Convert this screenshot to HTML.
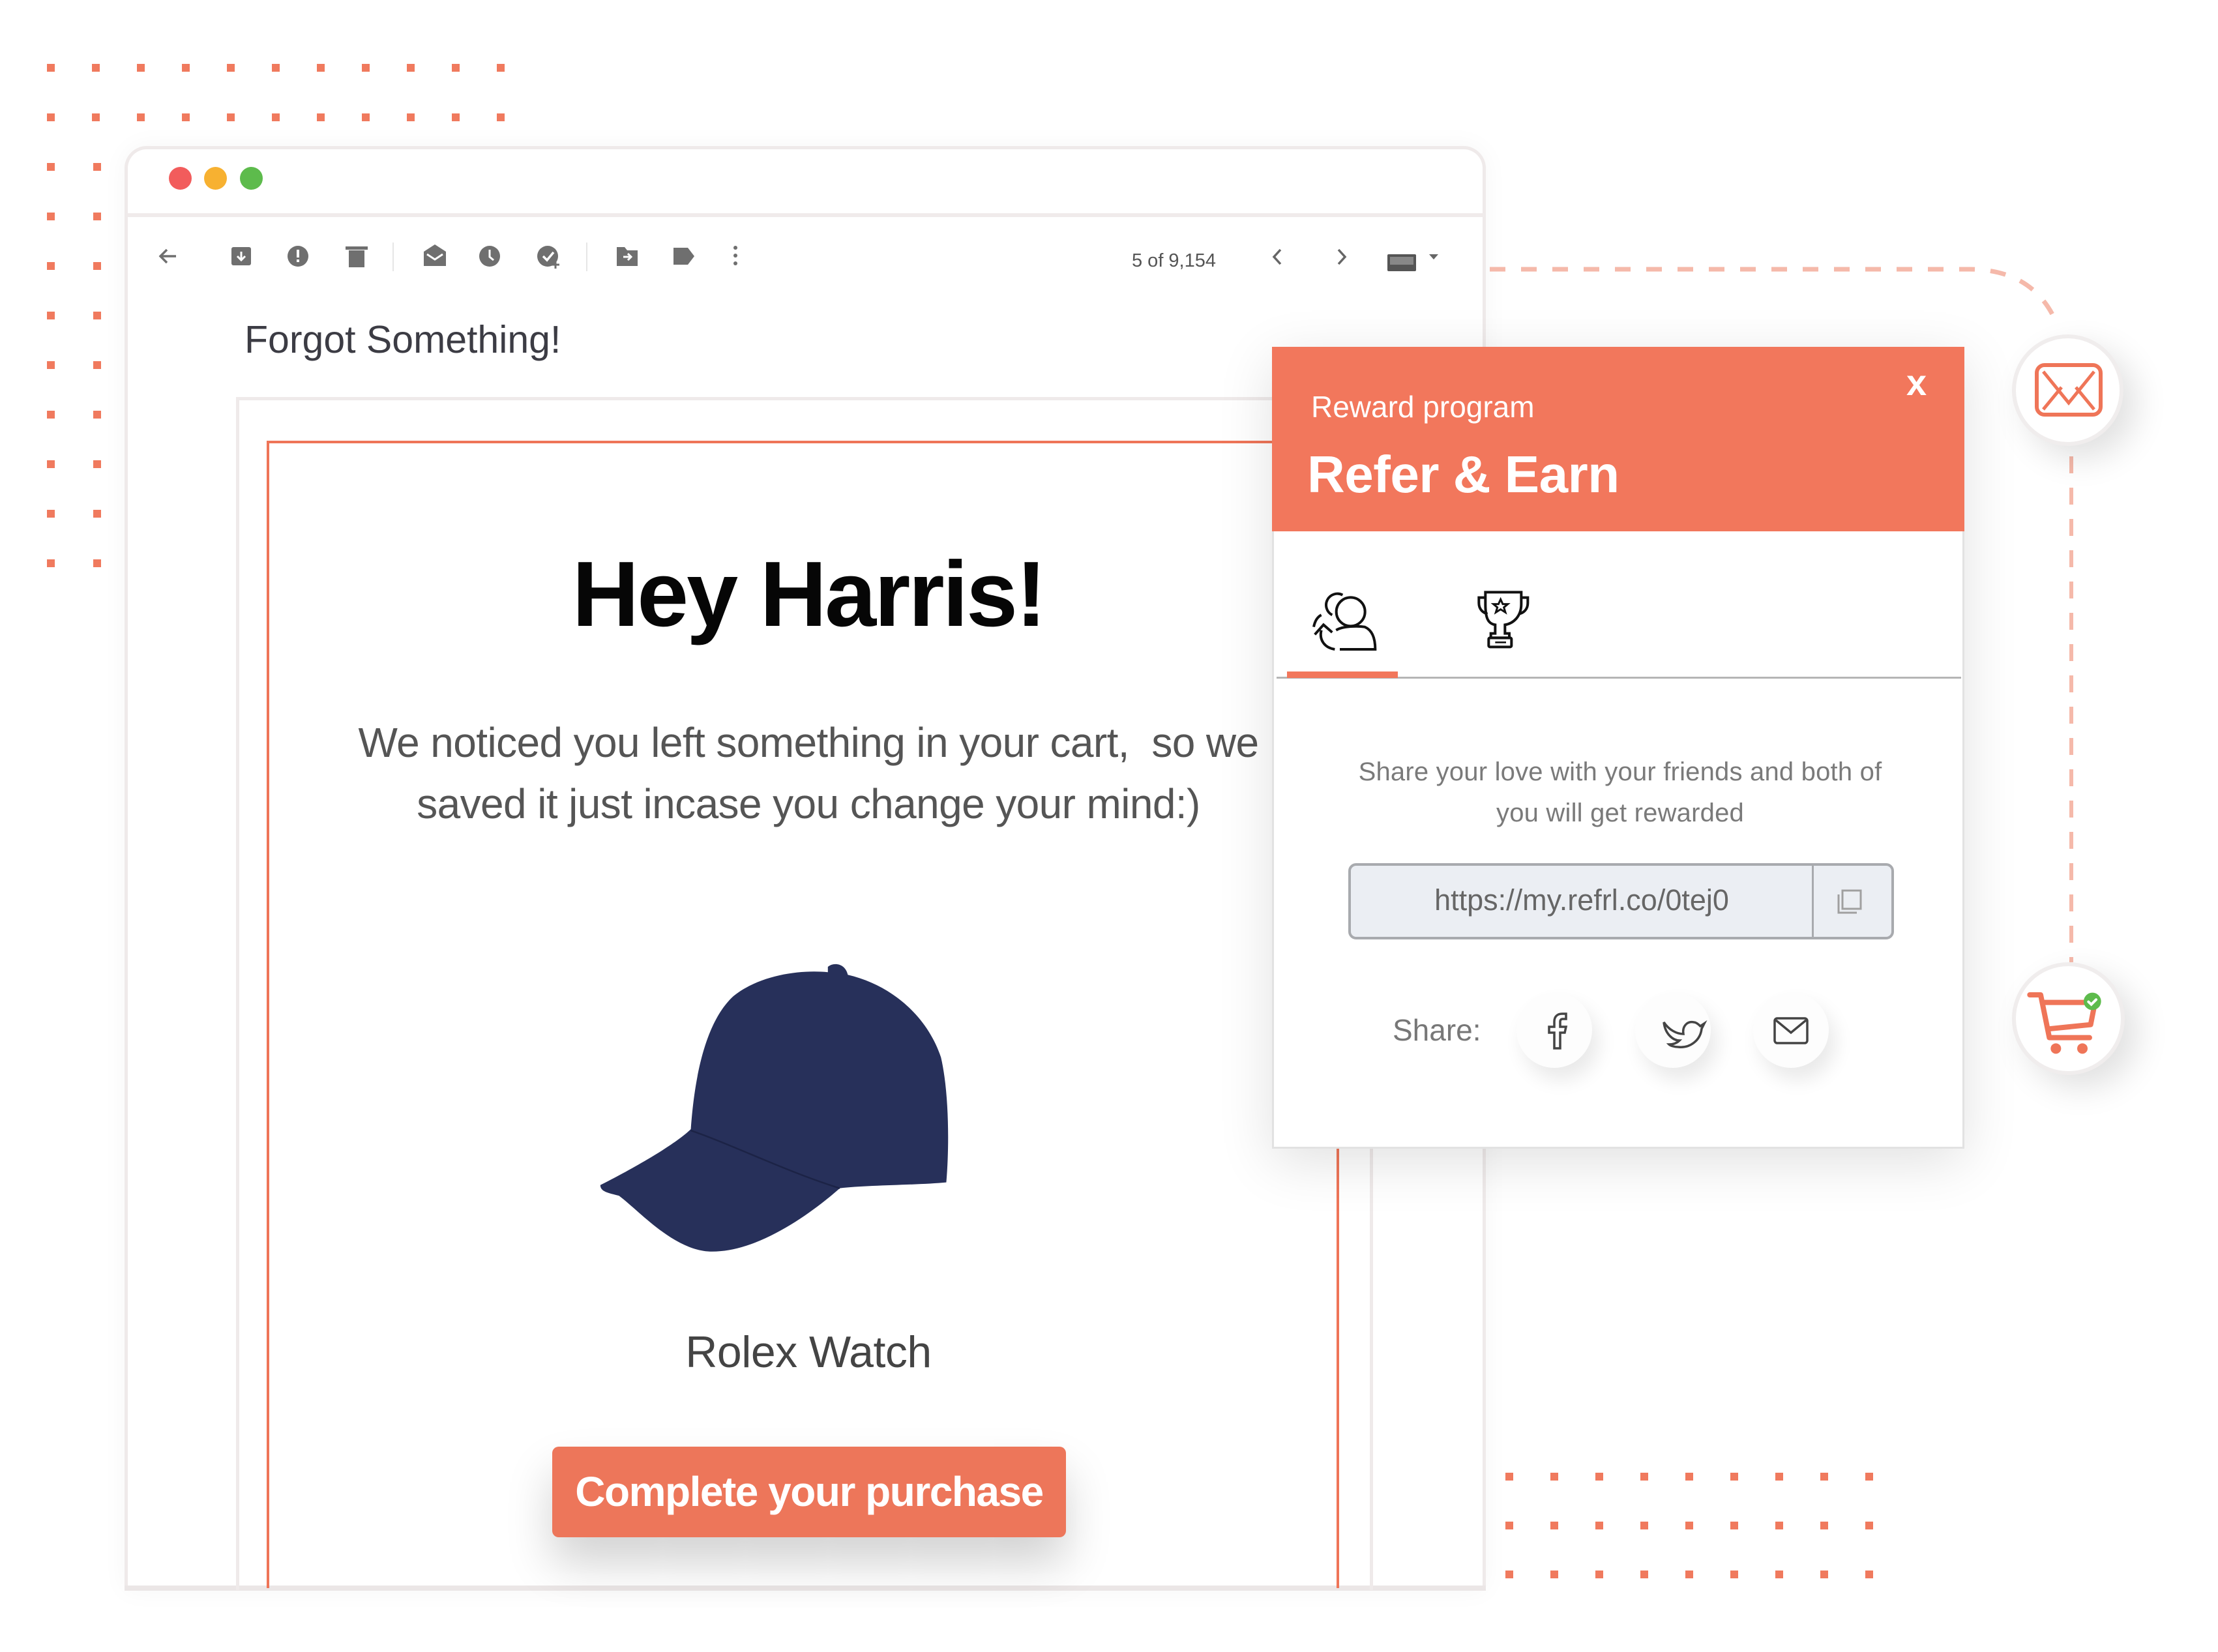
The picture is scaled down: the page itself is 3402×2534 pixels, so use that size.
<!DOCTYPE html>
<html><head><meta charset="utf-8"><style>
*{margin:0;padding:0;box-sizing:border-box}
body{width:3402px;height:2534px;background:#fff;position:relative;overflow:hidden;font-family:"Liberation Sans",sans-serif}
.a{position:absolute}
.dot{position:absolute;width:12px;height:12px;background:#f07a5e}
</style></head><body>

<div id="dots1"></div>
<script>
(function(){
 var h='';
 for(var r=0;r<2;r++)for(var c=0;c<11;c++)h+='<div class="dot" style="left:'+(72+c*69)+'px;top:'+(98+r*76)+'px"></div>';
 for(var r=0;r<9;r++)for(var c=0;c<2;c++)h+='<div class="dot" style="left:'+(72+c*71)+'px;top:'+(250+r*76)+'px"></div>';
 for(var r=0;r<3;r++)for(var c=0;c<9;c++)h+='<div class="dot" style="left:'+(2309+c*69)+'px;top:'+(2259+r*75)+'px"></div>';
 document.getElementById('dots1').innerHTML=h;
})();
</script>

<div class="a" style="left:191px;top:224px;width:2088px;height:2216px;border:5px solid #efeaea;border-bottom:none;border-radius:34px 34px 0 0;background:#fff;box-shadow:0 0 40px rgba(0,0,0,0.04)"></div>
<div class="a" style="left:191px;top:2432px;width:2088px;height:8px;background:#ebe6e6"></div>
<div class="a" style="left:196px;top:327px;width:2080px;height:6px;background:#f0ebeb"></div>
<div class="a" style="left:259px;top:256px;width:35px;height:35px;border-radius:50%;background:#f25c5c"></div>
<div class="a" style="left:313px;top:256px;width:35px;height:35px;border-radius:50%;background:#f7b131"></div>
<div class="a" style="left:368px;top:256px;width:35px;height:35px;border-radius:50%;background:#5dbb4c"></div>

<svg class="a" style="left:230px;top:370px" width="2030" height="50" viewBox="0 0 2030 50" fill="#6f6f6f">
 <path d="M40 23H16M26 13L16 23L26 33" stroke="#6f6f6f" stroke-width="3.5" fill="none"/>
 <rect x="125" y="9" width="30" height="28" rx="3"/><path d="M140 16v12M134 23l6 6 6-6" stroke="#fff" stroke-width="3" fill="none"/>
 <circle cx="227" cy="23" r="16"/><rect x="225" y="13" width="4" height="12" fill="#fff"/><rect x="225" y="28" width="4" height="4" fill="#fff"/>
 <rect x="305" y="14" width="24" height="26"/><rect x="300" y="8" width="34" height="5"/>
 <rect x="372" y="2" width="2" height="44" fill="#e6e6e6"/>
 <path d="M420 16L437 5L454 16V38H420Z"/><path d="M425 20l12 8 12-8" stroke="#fff" stroke-width="3" fill="none"/>
 <circle cx="521" cy="23" r="16"/><path d="M521 13v11l6 5" stroke="#fff" stroke-width="3" fill="none"/>
 <circle cx="610" cy="23" r="16"/><path d="M603 23l6 6 10-12" stroke="#fff" stroke-width="3.5" fill="none"/><path d="M622 30v12M616 36h12" stroke="#6f6f6f" stroke-width="3"/>
 <rect x="669" y="2" width="2" height="44" fill="#e6e6e6"/>
 <path d="M716 9h12l4 5h16v24h-32z"/><path d="M726 24h12M733 19l5 5-5 5" stroke="#fff" stroke-width="3" fill="none"/>
 <path d="M803 10h22l10 13-10 13h-22z"/>
 <circle cx="898" cy="10" r="3"/><circle cx="898" cy="22" r="3"/><circle cx="898" cy="34" r="3"/>
 <text x="1506" y="39" font-family="Liberation Sans" font-size="29" fill="#555">5 of 9,154</text>
 <path d="M1734 13l-10 11 10 11" stroke="#666" stroke-width="3.5" fill="none"/>
 <path d="M1823 13l10 11-10 11" stroke="#666" stroke-width="3.5" fill="none"/>
 <rect x="1898" y="20" width="44" height="26" rx="2" fill="#555"/><rect x="1902" y="24" width="36" height="12" fill="#888"/>
 <path d="M1962 20h14l-7 8z" fill="#666"/>
</svg>

<div class="a" style="left:375px;top:487px;font-size:59px;color:#3c3c44;letter-spacing:0px">Forgot Something!</div>

<div class="a" style="left:362px;top:609px;width:1744px;height:1830px;border:5px solid #efeaea;border-bottom:none"></div>
<div class="a" style="left:409px;top:676px;width:1645px;height:1760px;border:4px solid #ef7558;border-bottom:none"></div>

<div class="a" style="left:400px;top:830px;width:1680px;text-align:center;font-size:142px;font-weight:bold;color:#060606;letter-spacing:-3px">Hey Harris!</div>
<div class="a" style="left:420px;top:1092px;width:1640px;text-align:center;font-size:64px;line-height:94px;color:#555;letter-spacing:-0.6px">We noticed you left something in your cart,&nbsp; so we<br>saved it just incase you change your mind:)</div>

<svg class="a" style="left:880px;top:1430px" width="640" height="520" viewBox="0 0 1568 1274">
 <path d="M100 950C200 900 380 800 440 740C450 600 480 350 600 240C700 160 850 140 955 150L955 130C975 112 1020 115 1030 160C1200 200 1330 320 1380 470C1410 600 1412 800 1400 940C1300 950 1100 950 1000 962C900 1050 700 1200 520 1200C380 1200 250 1050 170 990C130 980 100 975 100 950Z" fill="#27305a"/>
 <path d="M440 745C600 800 800 900 1000 962" stroke="#1c2346" stroke-width="6" fill="none"/>
</svg>

<div class="a" style="left:400px;top:2035px;width:1680px;text-align:center;font-size:68px;color:#444;letter-spacing:-0.5px">Rolex Watch</div>

<div class="a" style="left:847px;top:2219px;width:788px;height:139px;background:#ed765a;border-radius:10px;box-shadow:0 40px 70px rgba(0,0,0,0.18);color:#fff;font-size:64px;font-weight:bold;text-align:center;line-height:139px;letter-spacing:-1.5px">Complete your purchase</div>

<svg class="a" style="left:0;top:0" width="3402" height="2534">
 <path d="M2285 413H3020Q3120 413 3155 497" stroke="#f5b9aa" stroke-width="7" fill="none" stroke-dasharray="24 24"/>
 <path d="M3177 700V1476" stroke="#f5b9aa" stroke-width="6" fill="none" stroke-dasharray="26 22"/>
</svg>

<div class="a" style="left:3086px;top:513px;width:171px;height:171px;border-radius:50%;background:#fff;border:6px solid #f0eded;box-shadow:20px 20px 50px rgba(0,0,0,0.12)"></div>
<svg class="a" style="left:3120px;top:556px" width="106" height="84" viewBox="0 0 106 84">
 <rect x="4" y="4" width="98" height="76" rx="12" fill="none" stroke="#ef7558" stroke-width="6"/>
 <path d="M14 14L53 62L92 14M14 72L42 38M92 72L64 38" stroke="#ef7558" stroke-width="5" fill="none"/>
</svg>

<div class="a" style="left:3086px;top:1476px;width:173px;height:173px;border-radius:50%;background:#fff;border:6px solid #f0eded;box-shadow:20px 20px 50px rgba(0,0,0,0.12)"></div>
<svg class="a" style="left:3060px;top:1440px" width="240" height="240" viewBox="0 0 720 720">
 <path d="M160 258H210L250 455H435" stroke="#ef7558" stroke-width="24" fill="none" stroke-linecap="round" stroke-linejoin="round"/>
 <path d="M222 293H460L440 395L245 415" stroke="#ef7558" stroke-width="24" fill="none" stroke-linejoin="round"/>
 <circle cx="280" cy="505" r="24" fill="#ef7558"/><circle cx="402" cy="505" r="24" fill="#ef7558"/>
 <circle cx="448" cy="288" r="40" fill="#5dbb4c"/><path d="M430 290l13 12 22-22" stroke="#fff" stroke-width="12" fill="none" stroke-linecap="round"/>
</svg>

<div class="a" style="left:1951px;top:532px;width:1062px;height:1230px;background:#fff;border:3px solid #e2e2e2;box-shadow:0 20px 80px rgba(0,0,0,0.12)"></div>
<div class="a" style="left:1951px;top:532px;width:1062px;height:283px;background:#f2775c"></div>
<div class="a" style="left:2011px;top:597px;font-size:46px;color:#fff">Reward program</div>
<div class="a" style="left:2005px;top:682px;font-size:80px;font-weight:bold;color:#fff;letter-spacing:-0.5px">Refer &amp; Earn</div>
<div class="a" style="left:2924px;top:554px;font-size:56px;font-weight:bold;color:#fff">x</div>

<svg class="a" style="left:1990px;top:880px" width="420" height="180" viewBox="0 0 1260 540" fill="none" stroke="#111" stroke-width="12">
 <path d="M208 98A48 48 0 1 0 160 190"/>
 <circle cx="245" cy="175" r="66"/>
 <path d="M178 260C210 240 280 240 310 245C345 260 358 300 358 348H195"/>
 <path d="M172 348C120 340 100 300 110 260M80 280L120 235L160 270M110 190C90 200 80 220 75 245"/>
 <path d="M865 85H1030V140C1030 200 990 230 955 235V275H975V295H890V275H910V235C875 230 865 200 865 140Z"/>
 <path d="M865 110H835V135C835 165 855 180 875 185M1030 110H1060V135C1060 165 1040 180 1020 185"/>
 <path d="M935 118L945 140L968 140L950 155L957 178L935 164L913 178L920 155L902 140L925 140Z" stroke-width="9"/>
 <rect x="880" y="295" width="105" height="42" rx="6"/><path d="M910 316H960" stroke-width="8"/>
</svg>
<div class="a" style="left:1958px;top:1038px;width:1050px;height:3px;background:#b5b5b5"></div>
<div class="a" style="left:1974px;top:1030px;width:170px;height:10px;background:#f2775c"></div>

<div class="a" style="left:1960px;top:1153px;width:1050px;text-align:center;font-size:40px;line-height:63px;color:#7a7a7a;letter-spacing:0.2px">Share your love with your friends and both of<br>you will get rewarded</div>

<div class="a" style="left:2068px;top:1324px;width:837px;height:117px;background:#ebeef3;border:4px solid #a8aaae;border-radius:12px"></div>
<div class="a" style="left:2779px;top:1326px;width:3px;height:113px;background:#a8aaae"></div>
<div class="a" style="left:2072px;top:1355px;width:708px;text-align:center;font-size:45px;color:#666">https://my.refrl.co/0tej0</div>
<svg class="a" style="left:2812px;top:1362px" width="50" height="44" viewBox="0 0 50 44" fill="none" stroke="#a0a0a0" stroke-width="3">
 <rect x="14" y="4" width="28" height="28"/><path d="M8 10V38H36"/>
</svg>

<div class="a" style="left:2136px;top:1553px;font-size:46px;color:#777">Share:</div>
<div class="a" style="left:2326px;top:1522px;width:116px;height:116px;border-radius:50%;background:#fdfdfd;box-shadow:10px 18px 30px rgba(0,0,0,0.09)"></div>
<div class="a" style="left:2508px;top:1522px;width:116px;height:116px;border-radius:50%;background:#fdfdfd;box-shadow:10px 18px 30px rgba(0,0,0,0.09)"></div>
<div class="a" style="left:2689px;top:1522px;width:116px;height:116px;border-radius:50%;background:#fdfdfd;box-shadow:10px 18px 30px rgba(0,0,0,0.09)"></div>
<svg class="a" style="left:2360px;top:1550px" width="420" height="64" viewBox="0 0 420 64" fill="none" stroke="#444" stroke-width="3.5">
 <path d="M24 58V34H16V25H24V17C24 9 29 5 36 5H42V13H37C34 13 33 15 33 17V25H42L40 34H33V58Z"/>
 <path d="M192 18C200 30 212 36 222 36C220 24 228 16 238 18C242 18 246 22 248 24L254 20L250 28C248 46 232 58 214 56C208 56 202 54 200 52C206 52 212 50 216 46C206 46 194 36 192 18Z"/>
 <rect x="362" y="12" width="50" height="38" rx="4"/><path d="M364 15L387 34L410 15"/>
</svg>

</body></html>
